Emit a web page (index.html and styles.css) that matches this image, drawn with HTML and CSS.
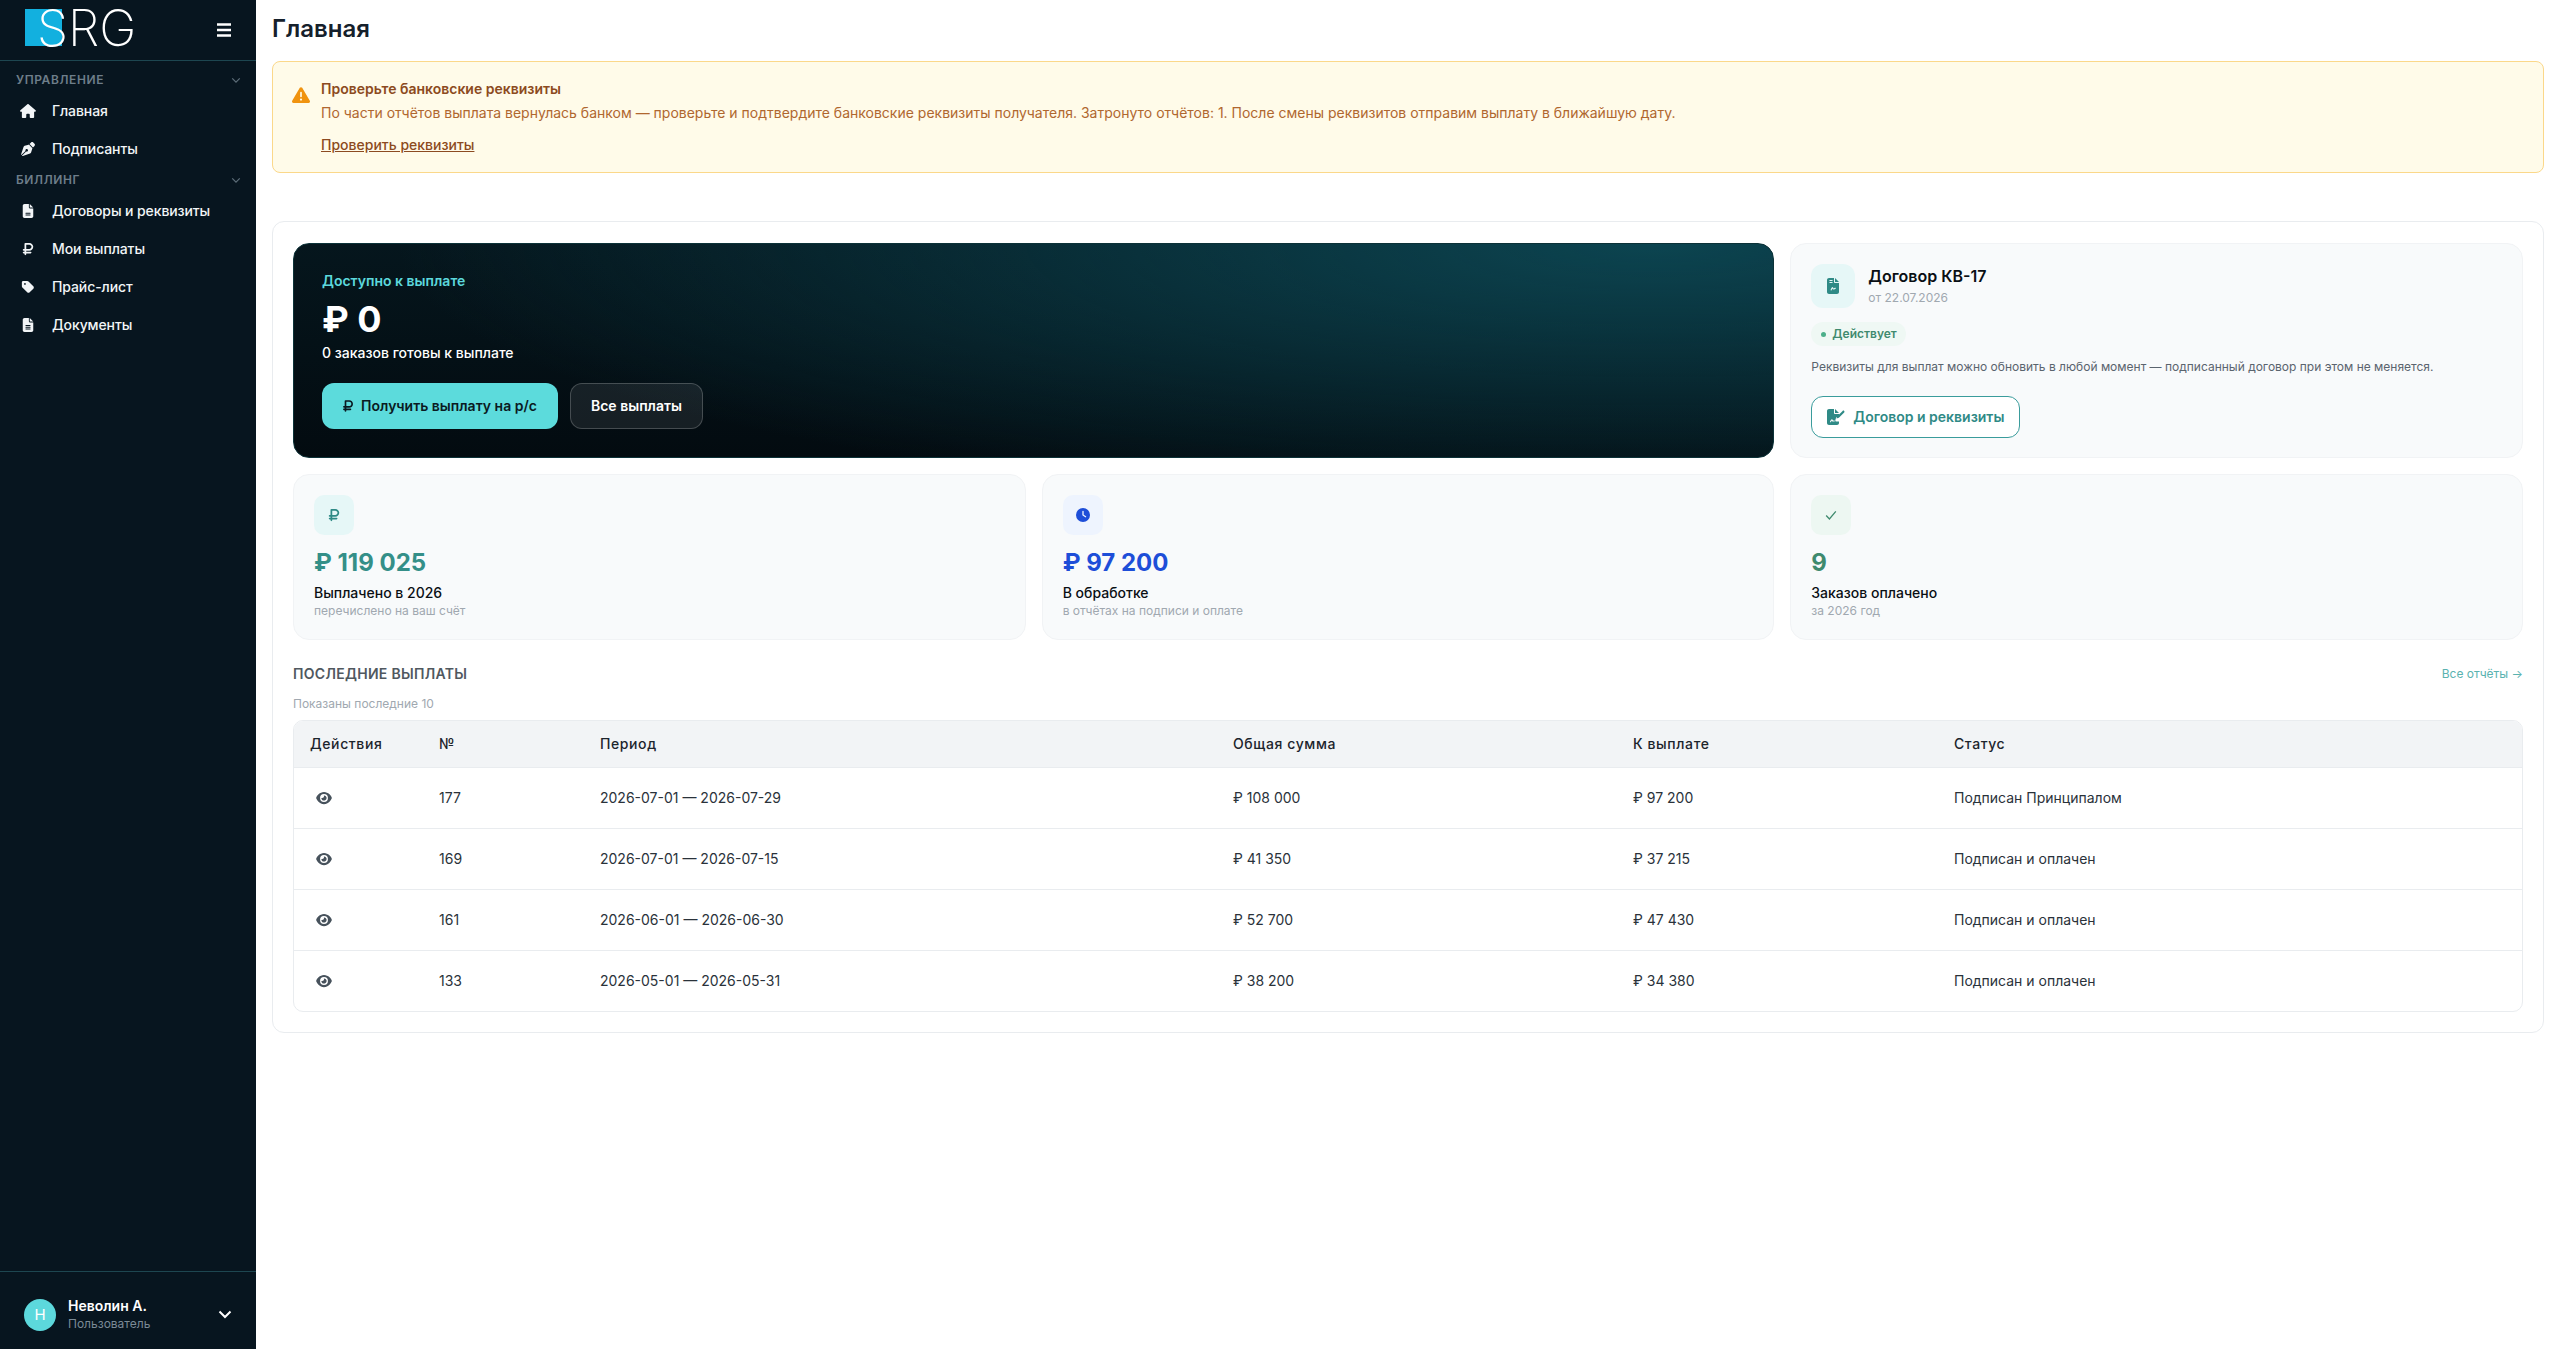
FILE: index.html
```html
<!DOCTYPE html>
<html lang="ru">
<head>
    <meta charset="UTF-8">
    <meta name="viewport" content="width=device-width, initial-scale=1.0">
    <title>Главная</title>
    <link rel="stylesheet" href="styles.css">
</head>
<body>
    <aside class="sidebar">
        <div class="brand">
            <div class="logo"><span class="logo-s">S</span>RG</div>
            <svg class="burger" viewBox="0 0 16 14"><path d="M1 1.5h14M1 7h14M1 12.5h14"/></svg>
        </div>
        <nav class="nav">
            <div class="nav-section">
                <span>Управление</span>
                <svg class="nav-chevron" viewBox="0 0 12 8"><path d="M1.5 1.5 6 6l4.5-4.5"/></svg>
            </div>
            <a class="nav-item">
                <svg class="nav-icon" viewBox="0 0 576 512"><path d="M575.8 255.5c0 18-15 32.1-32 32.1h-32l.7 160.2c0 2.7-.2 5.4-.5 8.1V472c0 22.1-17.9 40-40 40H392c-22.1 0-40-17.9-40-40V384c0-17.7-14.3-32-32-32H256c-17.7 0-32 14.3-32 32v88c0 22.1-17.9 40-40 40H104c-22.1 0-40-17.9-40-40V360c0-.9 0-1.9 .1-2.8V287.6H32c-18 0-32-14-32-32.1c0-9 3-17 10-24L266.4 8c7-7 15-8 22-8s15 2 21 7L564.8 231.5c8 7 12 15 11 24z"/></svg>
                Главная
            </a>
            <a class="nav-item">
                <svg class="nav-icon" viewBox="0 0 512 512"><path d="M368.4 18.3L312.7 74.1 437.9 199.3l55.7-55.7c21.9-21.9 21.9-57.3 0-79.2L447.6 18.3c-21.9-21.9-57.3-21.9-79.2 0zM288 94.6l-9.2 2.8L134.7 140.6c-19.9 6-35.7 21.2-42.3 41L3.8 445.8c-3.8 11.3-1 23.9 7.3 32.4L164.7 324.7c-3-6.3-4.7-13.3-4.7-20.7c0-26.5 21.5-48 48-48s48 21.5 48 48s-21.5 48-48 48c-7.4 0-14.4-1.7-20.7-4.7L33.7 500.9c8.6 8.3 21.1 11.2 32.4 7.3l264.3-88.6c19.7-6.6 35-22.4 41-42.3l43.2-144.1 2.8-9.2L288 94.6z"/></svg>
                Подписанты
            </a>
            <div class="nav-section">
                <span>Биллинг</span>
                <svg class="nav-chevron" viewBox="0 0 12 8"><path d="M1.5 1.5 6 6l4.5-4.5"/></svg>
            </div>
            <a class="nav-item">
                <svg class="nav-icon" viewBox="0 0 384 512"><path d="M64 0C28.7 0 0 28.7 0 64V448c0 35.3 28.7 64 64 64H320c35.3 0 64-28.7 64-64V160H256c-17.7 0-32-14.3-32-32V0H64zM256 0V128H384L256 0zM112 320H272c8.8 0 16 7.2 16 16s-7.2 16-16 16H112c-8.8 0-16-7.2-16-16s7.2-16 16-16zm0 64H272c8.8 0 16 7.2 16 16s-7.2 16-16 16H112c-8.8 0-16-7.2-16-16s7.2-16 16-16z"/></svg>
                Договоры и реквизиты
            </a>
            <a class="nav-item">
                <svg class="nav-icon" viewBox="0 0 384 512"><path d="M96 32C78.3 32 64 46.3 64 64V256H32c-17.7 0-32 14.3-32 32s14.3 32 32 32H64v32H32c-17.7 0-32 14.3-32 32s14.3 32 32 32H64v32c0 17.7 14.3 32 32 32s32-14.3 32-32V416H288c17.7 0 32-14.3 32-32s-14.3-32-32-32H128V320H240c79.5 0 144-64.5 144-144s-64.5-144-144-144H96zM240 256H128V96H240c44.2 0 80 35.8 80 80s-35.8 80-80 80z"/></svg>
                Мои выплаты
            </a>
            <a class="nav-item">
                <svg class="nav-icon" viewBox="0 0 448 512"><path d="M0 80V229.5c0 17 6.7 33.3 18.7 45.3l176 176c25 25 65.5 25 90.5 0L418.7 317.3c25-25 25-65.5 0-90.5l-176-176c-12-12-28.3-18.7-45.3-18.7H48C21.5 32 0 53.5 0 80zm112 32a32 32 0 1 1 0 64 32 32 0 1 1 0-64z"/></svg>
                Прайс-лист
            </a>
            <a class="nav-item">
                <svg class="nav-icon" viewBox="0 0 384 512"><path d="M64 0C28.7 0 0 28.7 0 64V448c0 35.3 28.7 64 64 64H320c35.3 0 64-28.7 64-64V160H256c-17.7 0-32-14.3-32-32V0H64zM256 0V128H384L256 0zM112 256H272c8.8 0 16 7.2 16 16s-7.2 16-16 16H112c-8.8 0-16-7.2-16-16s7.2-16 16-16zm0 64H272c8.8 0 16 7.2 16 16s-7.2 16-16 16H112c-8.8 0-16-7.2-16-16s7.2-16 16-16zm0 64H272c8.8 0 16 7.2 16 16s-7.2 16-16 16H112c-8.8 0-16-7.2-16-16s7.2-16 16-16z"/></svg>
                Документы
            </a>
        </nav>
        <div class="user">
            <div class="avatar">Н</div>
            <div class="user-info">
                <div class="user-name">Неволин А.</div>
                <div class="user-role">Пользователь</div>
            </div>
            <svg class="user-chevron" viewBox="0 0 14 9"><path d="M1.5 1.5 7 7l5.5-5.5"/></svg>
        </div>
    </aside>

    <main class="main">
        <h1 class="page-title">Главная</h1>

        <div class="alert">
            <svg class="alert-icon" viewBox="0 0 512 512"><path d="M256 32c14.2 0 27.3 7.5 34.5 19.8l216 368c7.3 12.4 7.3 27.7 .2 40.1S486.3 480 472 480H40c-14.3 0-27.6-7.7-34.7-20.1s-7-27.8 .2-40.1l216-368C228.7 39.5 241.8 32 256 32zm0 128c-13.3 0-24 10.7-24 24V296c0 13.3 10.7 24 24 24s24-10.7 24-24V184c0-13.3-10.7-24-24-24zm32 224a32 32 0 1 0 -64 0 32 32 0 1 0 64 0z"/></svg>
            <div>
                <div class="alert-title">Проверьте банковские реквизиты</div>
                <div class="alert-text">По части отчётов выплата вернулась банком — проверьте и подтвердите банковские реквизиты получателя. Затронуто отчётов: 1. После смены реквизитов отправим выплату в ближайшую дату.</div>
                <a class="alert-link">Проверить реквизиты</a>
            </div>
        </div>

        <section class="panel">
            <div class="grid">
                <div class="hero">
                    <div class="hero-label">Доступно к выплате</div>
                    <div class="hero-value">₽ 0</div>
                    <div class="hero-sub">0 заказов готовы к выплате</div>
                    <div class="hero-actions">
                        <a class="btn btn-primary">
                            <svg class="btn-icon" viewBox="0 0 384 512"><path d="M96 32C78.3 32 64 46.3 64 64V256H32c-17.7 0-32 14.3-32 32s14.3 32 32 32H64v32H32c-17.7 0-32 14.3-32 32s14.3 32 32 32H64v32c0 17.7 14.3 32 32 32s32-14.3 32-32V416H288c17.7 0 32-14.3 32-32s-14.3-32-32-32H128V320H240c79.5 0 144-64.5 144-144s-64.5-144-144-144H96zM240 256H128V96H240c44.2 0 80 35.8 80 80s-35.8 80-80 80z"/></svg>
                            Получить выплату на р/с
                        </a>
                        <a class="btn btn-ghost">Все выплаты</a>
                    </div>
                </div>

                <div class="card contract">
                    <div class="contract-head">
                        <div class="contract-icon">
                            <svg viewBox="0 0 384 512"><path d="M64 0C28.7 0 0 28.7 0 64V448c0 35.3 28.7 64 64 64H320c35.3 0 64-28.7 64-64V160H256c-17.7 0-32-14.3-32-32V0H64zM256 0V128H384L256 0zM88 64h80c8.8 0 16 7.2 16 16s-7.2 16-16 16H88c-8.8 0-16-7.2-16-16s7.2-16 16-16zm0 64h80c8.8 0 16 7.2 16 16s-7.2 16-16 16H88c-8.8 0-16-7.2-16-16s7.2-16 16-16zm30 240c30-60 46-82 62-82s20 50 34 50 24-22 60-22c9 0 16 7 16 16s-7 16-16 16c-20 0-32 24-60 24-28 0-30-28-36-28s-14 14-32 50c-4 8-14 11-22 7s-10-23-6-31z"/></svg>
                        </div>
                        <div>
                            <div class="contract-title">Договор КВ-17</div>
                            <div class="contract-date">от 22.07.2026</div>
                        </div>
                    </div>
                    <div class="badge"><span class="badge-dot"></span>Действует</div>
                    <p class="contract-text">Реквизиты для выплат можно обновить в любой момент — подписанный договор при этом не меняется.</p>
                    <a class="btn btn-outline">
                        <svg class="btn-icon-lg" viewBox="0 0 576 512"><path d="M64 0C28.7 0 0 28.7 0 64V448c0 35.3 28.7 64 64 64H320c35.3 0 64-28.7 64-64V400H300c-30 0-40-30-30-60l20-60L384 186V160H256c-17.7 0-32-14.3-32-32V0H64zM256 0V128H384L256 0zM100 400c30-60 46-70 62-70s20 34 34 34h40c9 0 16 7 16 16s-7 16-16 16h-50c-20 0-26-24-32-24s-14 14-26 42c-4 8-14 11-22 7s-10-13-6-21zM550 60c-14-14-36-14-50 0L330 230l-26 76 76-26L550 110c14-14 14-36 0-50z"/></svg>
                        Договор и реквизиты
                    </a>
                </div>

                <div class="card stat">
                    <div class="stat-icon stat-icon-teal">
                        <svg viewBox="0 0 384 512"><path d="M96 32C78.3 32 64 46.3 64 64V256H32c-17.7 0-32 14.3-32 32s14.3 32 32 32H64v32H32c-17.7 0-32 14.3-32 32s14.3 32 32 32H64v32c0 17.7 14.3 32 32 32s32-14.3 32-32V416H288c17.7 0 32-14.3 32-32s-14.3-32-32-32H128V320H240c79.5 0 144-64.5 144-144s-64.5-144-144-144H96zM240 256H128V96H240c44.2 0 80 35.8 80 80s-35.8 80-80 80z"/></svg>
                    </div>
                    <div class="stat-value stat-teal">₽ 119 025</div>
                    <div class="stat-label">Выплачено в 2026</div>
                    <div class="stat-sub">перечислено на ваш счёт</div>
                </div>
                <div class="card stat">
                    <div class="stat-icon stat-icon-blue">
                        <svg viewBox="0 0 512 512"><path d="M256 0a256 256 0 1 1 0 512A256 256 0 1 1 256 0zM232 120V256c0 8 4 15.5 10.7 20l96 64c11 7.4 25.9 4.4 33.3-6.7s4.4-25.9-6.7-33.3L280 243.2V120c0-13.3-10.7-24-24-24s-24 10.7-24 24z"/></svg>
                    </div>
                    <div class="stat-value stat-blue">₽ 97 200</div>
                    <div class="stat-label">В обработке</div>
                    <div class="stat-sub">в отчётах на подписи и оплате</div>
                </div>
                <div class="card stat">
                    <div class="stat-icon stat-icon-green">
                        <svg class="check" viewBox="0 0 16 16"><path d="M2.5 8.5 6.2 12.5 13.5 3.8"/></svg>
                    </div>
                    <div class="stat-value stat-green">9</div>
                    <div class="stat-label">Заказов оплачено</div>
                    <div class="stat-sub">за 2026 год</div>
                </div>
            </div>

            <div class="section-head">
                <h2 class="section-title">Последние выплаты</h2>
                <a class="section-link">Все отчёты →</a>
            </div>
            <div class="section-sub">Показаны последние 10</div>

            <div class="table-wrap">
                <table class="table">
                    <thead>
                        <tr>
                            <th class="col-actions">Действия</th>
                            <th class="col-num">№</th>
                            <th class="col-period">Период</th>
                            <th class="col-total">Общая сумма</th>
                            <th class="col-pay">К выплате</th>
                            <th>Статус</th>
                        </tr>
                    </thead>
                    <tbody>
                        <tr>
                            <td><svg class="eye" viewBox="0 0 576 512"><path d="M288 32c-80.8 0-145.5 36.8-192.6 80.6C48.6 156 17.3 208 2.5 243.7c-3.3 7.9-3.3 16.7 0 24.6C17.3 304 48.6 356 95.4 399.4C142.5 443.2 207.2 480 288 480s145.5-36.8 192.6-80.6c46.8-43.5 78.1-95.4 93-131.1c3.3-7.9 3.3-16.7 0-24.6c-14.9-35.7-46.2-87.7-93-131.1C433.5 68.8 368.8 32 288 32zM144 256a144 144 0 1 1 288 0 144 144 0 1 1 -288 0zm144-64c0 35.3-28.7 64-64 64c-7.1 0-13.9-1.2-20.3-3.3c-5.5-1.8-11.9 1.6-11.7 7.4c.3 6.9 1.3 13.8 3.2 20.7c13.7 51.2 66.4 81.6 117.6 67.9s81.6-66.4 67.9-117.6c-11.1-41.5-47.8-69.4-88.6-71.1c-5.8-.2-9.2 6.1-7.4 11.7c2.1 6.4 3.3 13.2 3.3 20.3z"/></svg></td>
                            <td>177</td>
                            <td>2026-07-01 — 2026-07-29</td>
                            <td>₽ 108 000</td>
                            <td>₽ 97 200</td>
                            <td>Подписан Принципалом</td>
                        </tr>
                        <tr>
                            <td><svg class="eye" viewBox="0 0 576 512"><path d="M288 32c-80.8 0-145.5 36.8-192.6 80.6C48.6 156 17.3 208 2.5 243.7c-3.3 7.9-3.3 16.7 0 24.6C17.3 304 48.6 356 95.4 399.4C142.5 443.2 207.2 480 288 480s145.5-36.8 192.6-80.6c46.8-43.5 78.1-95.4 93-131.1c3.3-7.9 3.3-16.7 0-24.6c-14.9-35.7-46.2-87.7-93-131.1C433.5 68.8 368.8 32 288 32zM144 256a144 144 0 1 1 288 0 144 144 0 1 1 -288 0zm144-64c0 35.3-28.7 64-64 64c-7.1 0-13.9-1.2-20.3-3.3c-5.5-1.8-11.9 1.6-11.7 7.4c.3 6.9 1.3 13.8 3.2 20.7c13.7 51.2 66.4 81.6 117.6 67.9s81.6-66.4 67.9-117.6c-11.1-41.5-47.8-69.4-88.6-71.1c-5.8-.2-9.2 6.1-7.4 11.7c2.1 6.4 3.3 13.2 3.3 20.3z"/></svg></td>
                            <td>169</td>
                            <td>2026-07-01 — 2026-07-15</td>
                            <td>₽ 41 350</td>
                            <td>₽ 37 215</td>
                            <td>Подписан и оплачен</td>
                        </tr>
                        <tr>
                            <td><svg class="eye" viewBox="0 0 576 512"><path d="M288 32c-80.8 0-145.5 36.8-192.6 80.6C48.6 156 17.3 208 2.5 243.7c-3.3 7.9-3.3 16.7 0 24.6C17.3 304 48.6 356 95.4 399.4C142.5 443.2 207.2 480 288 480s145.5-36.8 192.6-80.6c46.8-43.5 78.1-95.4 93-131.1c3.3-7.9 3.3-16.7 0-24.6c-14.9-35.7-46.2-87.7-93-131.1C433.5 68.8 368.8 32 288 32zM144 256a144 144 0 1 1 288 0 144 144 0 1 1 -288 0zm144-64c0 35.3-28.7 64-64 64c-7.1 0-13.9-1.2-20.3-3.3c-5.5-1.8-11.9 1.6-11.7 7.4c.3 6.9 1.3 13.8 3.2 20.7c13.7 51.2 66.4 81.6 117.6 67.9s81.6-66.4 67.9-117.6c-11.1-41.5-47.8-69.4-88.6-71.1c-5.8-.2-9.2 6.1-7.4 11.7c2.1 6.4 3.3 13.2 3.3 20.3z"/></svg></td>
                            <td>161</td>
                            <td>2026-06-01 — 2026-06-30</td>
                            <td>₽ 52 700</td>
                            <td>₽ 47 430</td>
                            <td>Подписан и оплачен</td>
                        </tr>
                        <tr>
                            <td><svg class="eye" viewBox="0 0 576 512"><path d="M288 32c-80.8 0-145.5 36.8-192.6 80.6C48.6 156 17.3 208 2.5 243.7c-3.3 7.9-3.3 16.7 0 24.6C17.3 304 48.6 356 95.4 399.4C142.5 443.2 207.2 480 288 480s145.5-36.8 192.6-80.6c46.8-43.5 78.1-95.4 93-131.1c3.3-7.9 3.3-16.7 0-24.6c-14.9-35.7-46.2-87.7-93-131.1C433.5 68.8 368.8 32 288 32zM144 256a144 144 0 1 1 288 0 144 144 0 1 1 -288 0zm144-64c0 35.3-28.7 64-64 64c-7.1 0-13.9-1.2-20.3-3.3c-5.5-1.8-11.9 1.6-11.7 7.4c.3 6.9 1.3 13.8 3.2 20.7c13.7 51.2 66.4 81.6 117.6 67.9s81.6-66.4 67.9-117.6c-11.1-41.5-47.8-69.4-88.6-71.1c-5.8-.2-9.2 6.1-7.4 11.7c2.1 6.4 3.3 13.2 3.3 20.3z"/></svg></td>
                            <td>133</td>
                            <td>2026-05-01 — 2026-05-31</td>
                            <td>₽ 38 200</td>
                            <td>₽ 34 380</td>
                            <td>Подписан и оплачен</td>
                        </tr>
                    </tbody>
                </table>
            </div>
        </section>
    </main>
</body>
</html>
```

FILE: styles.css
```css
* {
    box-sizing: border-box;
}
body {
    margin: 0;
    display: flex;
    min-height: 100vh;
    font-family: Inter, "Noto Sans", sans-serif;
    font-size: 14px;
    line-height: 20px;
    background-color: white;
    color: #15202b;
}
svg {
    display: block;
    flex-shrink: 0;
    fill: currentColor;
}

/* sidebar */
.sidebar {
    width: 256px;
    height: 100vh;
    flex-shrink: 0;
    display: flex;
    flex-direction: column;
    background-color: #07151f;
    color: white;
}
.brand {
    height: 61px;
    padding: 0 24px 0 25px;
    display: flex;
    align-items: center;
    justify-content: space-between;
    border-bottom: 1px solid #1d4650;
}
.logo {
    display: flex;
    font-weight: 200;
    font-size: 50px;
    line-height: 60px;
    height: 60px;
    margin-top: -4px;
    padding-left: 12px;
    background: linear-gradient(#12b0df, #12b0df) no-repeat left 11px / 37px 37px;
}
.burger {
    width: 16px;
    height: 14px;
    fill: none;
    stroke: white;
    stroke-width: 2.4;
}
.nav {
    flex: 1;
    padding-top: 7px;
}
.nav-section {
    height: 24px;
    padding: 0 16px;
    display: flex;
    align-items: center;
    justify-content: space-between;
    font-size: 12px;
    font-weight: 600;
    letter-spacing: .6px;
    text-transform: uppercase;
    color: #6e7e8a;
}
.nav-chevron {
    width: 10px;
    height: 7px;
    fill: none;
    stroke: #5c6c78;
    stroke-width: 1.5;
    margin-right: -1px;
}
.nav-item {
    height: 38px;
    padding-left: 20px;
    display: flex;
    align-items: center;
    font-weight: 500;
    letter-spacing: -.1px;
    color: #f2f5f7;
}
.nav-icon {
    width: 16px;
    height: 14px;
    margin-right: 16px;
}
.user {
    height: 78px;
    padding: 0 24px;
    display: flex;
    align-items: center;
    border-top: 1px solid #1d4650;
}
.avatar {
    width: 32px;
    height: 32px;
    border-radius: 50%;
    display: flex;
    align-items: center;
    justify-content: center;
    background-color: #5cd8dc;
    font-size: 15px;
    margin-top: 8px;
}
.user-info {
    flex: 1;
    margin-left: 12px;
    margin-top: 8px;
}
.user-name {
    font-weight: 600;
    line-height: 18px;
}
.user-role {
    font-size: 12px;
    line-height: 18px;
    color: #7b8a96;
}
.user-chevron {
    width: 14px;
    height: 9px;
    fill: none;
    stroke: white;
    stroke-width: 2;
    margin-top: 8px;
}

/* main */
.main {
    flex: 1;
    min-width: 0;
    padding: 16px 15px 16px 16px;
}
.page-title {
    margin: 0 0 19px;
    font-size: 24px;
    line-height: 26px;
    font-weight: 600;
}
.alert {
    height: 112px;
    padding: 17px 19px;
    display: flex;
    gap: 11px;
    background-color: #fffbe9;
    border: 1px solid #fbd88a;
    border-radius: 8px;
    color: #b0672f;
}
.alert-icon {
    width: 18px;
    height: 18px;
    margin-top: 7px;
    color: #f0930f;
}
.alert-title {
    font-weight: 600;
    color: #8c4a20;
}
.alert-text {
    margin-top: 4px;
}
.alert-link {
    display: inline-block;
    margin-top: 12px;
    color: #8c4a20;
    font-weight: 500;
    text-decoration: underline;
}
.panel {
    margin-top: 48px;
    padding: 21px 20px;
    border: 1px solid #e9ecef;
    border-radius: 12px;
    height: 812px;
}
.grid {
    display: grid;
    grid-template-columns: repeat(3, 1fr);
    grid-template-rows: 215px 166px;
    gap: 16px;
}
.hero {
    grid-column: span 2;
    padding: 27px 27px 27px 28px;
    border: 1px solid #0c3238;
    border-radius: 16px;
    color: white;
    background: radial-gradient(ellipse 85% 125% at 92% 0%, #0c4450 0%, rgba(12, 68, 80, 0) 100%), linear-gradient(#05161d, #030b10);
}
.hero-label {
    font-weight: 600;
    color: #5cd8dc;
}
.hero-value {
    margin-top: 10px;
    font-size: 36px;
    line-height: 36px;
    font-weight: 700;
}
.hero-sub {
    margin-top: 6px;
    font-weight: 500;
}
.hero-actions {
    margin-top: 20px;
    display: flex;
    gap: 12px;
}
.btn {
    display: inline-flex;
    align-items: center;
    justify-content: center;
    border-radius: 12px;
    font-weight: 600;
}
.btn-primary {
    width: 236px;
    height: 46px;
    gap: 8px;
    background-color: #5cdbdc;
    color: #0a1a22;
}
.btn-icon {
    width: 10px;
    height: 14px;
}
.btn-ghost {
    width: 133px;
    height: 46px;
    background-color: rgba(255, 255, 255, .08);
    border: 1px solid rgba(255, 255, 255, .2);
    color: white;
}
.card {
    padding: 20px;
    background-color: #f8fafb;
    border: 1px solid #f1f3f5;
    border-radius: 16px;
}
.contract-head {
    display: flex;
    gap: 13px;
}
.contract-icon {
    width: 44px;
    height: 44px;
    border-radius: 12px;
    display: flex;
    align-items: center;
    justify-content: center;
    background-color: #e6f7f7;
    color: #2f8a86;
}
.contract-icon svg {
    width: 12px;
    height: 16px;
}
.contract-title {
    font-size: 16px;
    line-height: 24px;
    font-weight: 600;
    color: #0a0f14;
}
.contract-date {
    margin-top: 2px;
    font-size: 12px;
    line-height: 16px;
    color: #a0a8b0;
}
.badge {
    width: 95px;
    height: 24px;
    margin-top: 14px;
    padding-left: 10px;
    display: flex;
    align-items: center;
    gap: 6px;
    border-radius: 12px;
    background-color: #eff8f4;
    font-size: 12px;
    font-weight: 600;
    color: #3f8a6e;
}
.badge-dot {
    width: 5px;
    height: 5px;
    border-radius: 50%;
    background-color: #4caf8a;
}
.contract-text {
    margin: 11px 0 0;
    font-size: 12px;
    line-height: 20px;
    color: #5a646e;
}
.btn-outline {
    width: 209px;
    height: 42px;
    margin-top: 19px;
    gap: 8px;
    background-color: white;
    border: 1px solid #3a9c9c;
    color: #2f8a86;
}
.btn-icon-lg {
    width: 18px;
    height: 16px;
}
.stat-icon {
    width: 40px;
    height: 40px;
    border-radius: 10px;
    display: flex;
    align-items: center;
    justify-content: center;
}
.stat-icon svg {
    width: 14px;
    height: 14px;
}
.stat-icon-teal {
    background-color: #e6f7f7;
    color: #2f8a86;
}
.stat-icon-blue {
    background-color: #eef4fe;
    color: #1d4ed8;
}
.stat-icon-green {
    background-color: #edf7f2;
    color: #3f8a6e;
}
.check {
    fill: none;
    stroke: #3f8a6e;
    stroke-width: 1.5;
}
.stat-value {
    margin-top: 14px;
    font-size: 24px;
    line-height: 28px;
    font-weight: 700;
}
.stat-teal {
    color: #348f88;
}
.stat-blue {
    color: #1d4ed8;
}
.stat-green {
    color: #3f8a6e;
}
.stat-label {
    margin-top: 6px;
    font-weight: 500;
    color: #0a0f14;
}
.stat-sub {
    font-size: 12px;
    line-height: 16px;
    color: #a0a8b0;
}
.section-head {
    margin-top: 24px;
    display: flex;
    align-items: center;
    justify-content: space-between;
}
.section-title {
    margin: 0;
    font-size: 14px;
    line-height: 20px;
    font-weight: 600;
    letter-spacing: .3px;
    text-transform: uppercase;
    color: #50585f;
}
.section-link {
    font-size: 12px;
    color: #5ab3b0;
}
.section-sub {
    margin-top: 10px;
    font-size: 12px;
    line-height: 20px;
    color: #a0a8b0;
}
.table-wrap {
    margin-top: 6px;
    border: 1px solid #e9ecef;
    border-radius: 10px;
    overflow: hidden;
}
.table {
    width: 100%;
    table-layout: fixed;
    border-collapse: collapse;
}
.table th {
    height: 46px;
    padding: 0 17px;
    text-align: left;
    font-weight: 500;
    letter-spacing: .6px;
    color: #1c242c;
    background-color: #f2f4f6;
    border-bottom: 1px solid #e9ecef;
}
.table th.col-actions {
    padding-left: 16px;
}
.table td {
    height: 61px;
    padding: 0 17px;
    color: #2a323a;
    border-bottom: 1px solid #e9ecef;
}
.table tr:last-child td {
    border-bottom: 0;
}
.col-actions {
    width: 128px;
}
.col-num {
    width: 161px;
}
.col-period {
    width: 633px;
}
.col-total {
    width: 400px;
}
.col-pay {
    width: 321px;
}
.eye {
    width: 16px;
    height: 14px;
    margin-left: 5px;
    color: #47525c;
}
```
